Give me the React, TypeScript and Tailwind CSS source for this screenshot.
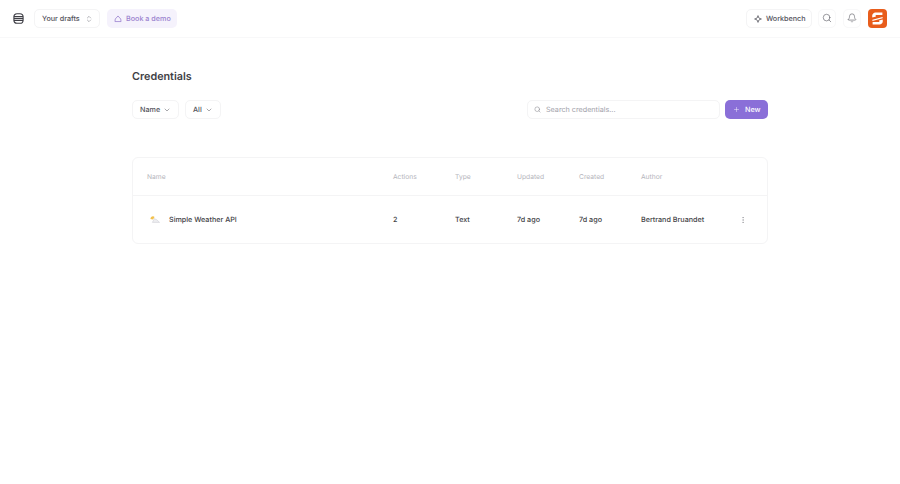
import { Search, Bell, Plus, ChevronDown, ChevronsUpDown, EllipsisVertical } from "lucide-react";

function Logo() {
  return (
    <svg width="19" height="19" viewBox="0 0 19 19">
      <rect width="19" height="19" rx="4" fill="#e85d1c" />
      <path d="M14.4 3.4 H8.4 C5.2 3.4 3.6 5.4 4.4 8.4 L8 7.6 C7.2 6.4 7.6 6 8.8 6 H14.4 Z" fill="#fff" />
      <path d="M4.6 15.6 H10.6 C13.8 15.6 15.4 13.6 14.6 10.6 L11 11.4 C11.8 12.6 11.4 13 10.2 13 H4.6 Z" fill="#fff" />
      <path d="M4.4 10.8 L14.6 8.1 L14.6 9.2 L4.4 11.9 Z" fill="#fff" />
    </svg>
  );
}

function Stack() {
  return (
    <svg width="11" height="11" viewBox="0 0 12 12" fill="none" stroke="#3f3f46" strokeWidth="1.2">
      <rect x="1" y="0.8" width="10" height="10.4" rx="3.4" />
      <path d="M1 4h10M1 6h10M1 8h10" />
    </svg>
  );
}

function Home() {
  return (
    <svg width="8" height="8" viewBox="0 0 10 10" fill="none" stroke="#9b82cf" strokeWidth="1">
      <path d="M1.2 8.2 L1.6 5 L5 1.2 L8.4 5 L8.8 8.2 Z" strokeLinejoin="round" />
    </svg>
  );
}

function Spark() {
  return (
    <svg width="8" height="8" viewBox="0 0 10 10" fill="none" stroke="#52525b" strokeWidth="1">
      <path d="M5 .8 C5.4 3.4 6.6 4.6 9.2 5 C6.6 5.4 5.4 6.6 5 9.2 C4.6 6.6 3.4 5.4 .8 5 C3.4 4.6 4.6 3.4 5 .8Z" strokeLinejoin="round" />
    </svg>
  );
}

function Weather() {
  return (
    <svg width="10" height="7" viewBox="0 0 10 7">
      <path d="M.4 3 A2.6 2.6 0 0 1 4.6 .9 L3 3.4 Z" fill="#f2c14e" />
      <path d="M2.4 6.4 L4.4 2.6 L6.8 3.8 L9.6 6.4 Z" fill="#eeeef0" stroke="#c9c9d0" strokeWidth=".5" />
    </svg>
  );
}

export default function App() {
  return (
    <div className="min-h-[484px] w-[900px] bg-white text-[#3f3f46] font-['Inter',sans-serif] text-[7.2px] leading-[11px] whitespace-nowrap antialiased [text-rendering:geometricPrecision]">
      <header className="h-[38px] flex items-center border-b border-[#f8f8f9] pl-[13px] pr-[13px]">
        <Stack />
        <div className="ml-[10px] h-[19px] w-[66px] flex items-center justify-between rounded-[5px] border border-[#f4f4f5] pl-[7px] pr-[6px] font-medium text-[#52525b]">
          <span>Your drafts</span>
          <ChevronsUpDown size={8} strokeWidth={1.5} className="text-[#71717a]" />
        </div>
        <div className="ml-[7px] h-[19px] w-[70px] flex items-center gap-[4px] rounded-[5px] bg-[#f5f2fc] pl-[7px] font-medium text-[#9b82cf]">
          <Home />
          <span>Book a demo</span>
        </div>
        <div className="ml-auto h-[19px] w-[66px] flex items-center gap-[4px] rounded-[5px] border border-[#f4f4f5] pl-[7px] font-medium text-[#52525b]">
          <Spark />
          <span>Workbench</span>
        </div>
        <div className="ml-[6px] w-[18px] h-[19px] flex items-center justify-center rounded-[5px] border border-[#f8f8f9] pb-[1px]">
          <Search size={10} strokeWidth={1.4} className="text-[#52525b]" />
        </div>
        <div className="ml-[7px] w-[18px] h-[19px] flex items-center justify-center rounded-[5px] border border-[#f8f8f9] pb-[1px]">
          <Bell size={10} strokeWidth={1.4} className="text-[#52525b]" />
        </div>
        <div className="ml-[7px]"><Logo /></div>
      </header>

      <main className="w-[636px] ml-[132px]">
        <h1 className="mt-[30px] text-[10.8px] leading-[18px] font-semibold text-[#3f3f46]">Credentials</h1>
        <div className="mt-[14px] flex items-center h-[19px]">
          <div className="h-[19px] w-[47px] flex items-center justify-between rounded-[5px] border border-[#f4f4f5] px-[7px] font-medium text-[#52525b]">
            <span>Name</span><ChevronDown size={8} strokeWidth={1.5} />
          </div>
          <div className="ml-[6px] h-[19px] w-[36px] flex items-center justify-between rounded-[5px] border border-[#f4f4f5] px-[7px] font-medium text-[#52525b]">
            <span>All</span><ChevronDown size={8} strokeWidth={1.5} />
          </div>
          <div className="ml-auto h-[19px] w-[193px] flex items-center gap-[5px] rounded-[5px] border border-[#f4f4f5] pl-[6px] text-[#a1a1aa]">
            <Search size={7} strokeWidth={1.5} className="text-[#71717a] mb-[1px]" />
            <span>Search credentials...</span>
          </div>
          <div className="ml-[5px] h-[19px] w-[43px] flex items-center gap-[5px] rounded-[5px] bg-[#8a6fd8] pl-[8px] font-medium text-white">
            <Plus size={7} strokeWidth={1.5} />
            <span>New</span>
          </div>
        </div>

        <div className="mt-[38px] h-[87px] rounded-[6px] border border-[#f4f4f5]">
          <div className="h-[38px] pt-[1px] grid grid-cols-[246px_62px_62px_62px_62px_1fr] items-center pl-[14px] text-[6.7px] text-[#b4b4bb] border-b border-[#f4f4f5]">
            <span>Name</span>
            <span>Actions</span>
            <span>Type</span>
            <span>Updated</span>
            <span>Created</span>
            <span>Author</span>
          </div>
          <div className="h-[47px] grid grid-cols-[246px_62px_62px_62px_62px_1fr] items-center pl-[14px] font-medium text-[#3f3f46]">
            <div className="flex items-center gap-[9px] pl-[3px]"><Weather /><span>Simple Weather API</span></div>
            <span>2</span>
            <span>Text</span>
            <span>7d ago</span>
            <span>7d ago</span>
            <div className="flex items-center justify-between pr-[20px]">
              <span>Bertrand Bruandet</span>
              <EllipsisVertical size={8} strokeWidth={1.2} className="text-[#71717a]" />
            </div>
          </div>
        </div>
      </main>
    </div>
  );
}
